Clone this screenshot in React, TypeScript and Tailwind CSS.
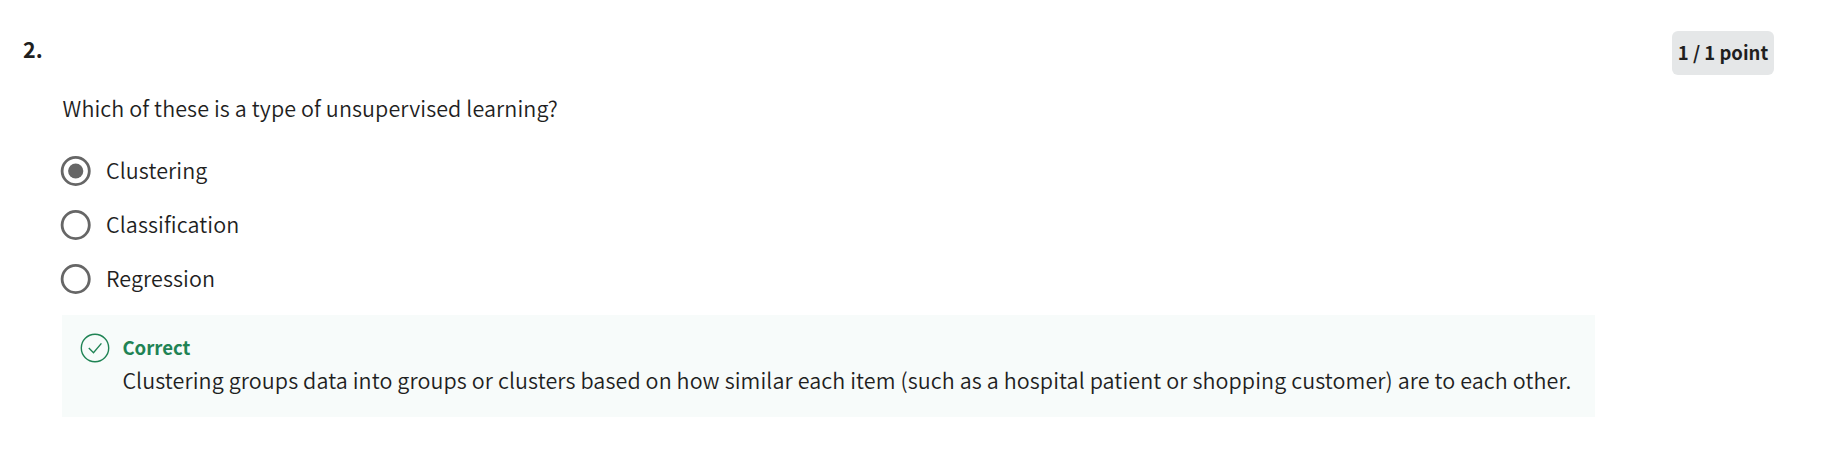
const options = [
  { label: "Clustering", selected: true },
  { label: "Classification", selected: false },
  { label: "Regression", selected: false },
];

function Radio({ selected }: { selected: boolean }) {
  return (
    <svg className="size-[32px] shrink-0" viewBox="0 0 32 32" fill="none">
      <circle cx="15.7" cy="16" r="13.6" stroke="#666" strokeWidth="2.8" />
      {selected && <circle cx="15.7" cy="16" r="7.6" fill="#666" />}
    </svg>
  );
}

export default function App() {
  return (
    <main className="h-[457px] overflow-hidden bg-white font-['Noto_Sans_CJK_SC',sans-serif] text-[21.5px] leading-[30px] font-[350] tracking-[0.096px] text-[#1f1f1f]">
      <header className="flex items-start justify-between pt-[31px] pr-[51px] pl-[23px]">
        <h2 className="pt-[3px] font-bold tracking-normal">2.</h2>
        <div className="flex h-11 w-[102px] items-center justify-center rounded-md bg-[#e5e7e8] pb-[2px] text-[18.5px] font-bold tracking-normal whitespace-nowrap">
          1 / 1 point
        </div>
      </header>
      <section className="pl-[62px]">
        <p className="mt-[18px] pl-[0.6px]">Which of these is a type of unsupervised learning?</p>
        <div className="mt-[21px] -ml-[2px] flex flex-col">
          {options.map((option) => (
            <label key={option.label} className="flex h-[54px] items-center gap-[14px]">
              <Radio selected={option.selected} />
              <span className="pb-[2px]">{option.label}</span>
            </label>
          ))}
        </div>
        <div className="mt-[9px] flex h-[102px] w-[1533px] gap-[12px] bg-[#f7fbfa] pt-[18px] pl-[18px]">
          <svg className="size-[30px] shrink-0" viewBox="0 0 30 30" fill="none" stroke="#1f8354" strokeWidth="1.4">
            <circle cx="15" cy="15" r="13.7" />
            <path d="m8.8 15.1 4.7 4.7 7.9-9.4" />
          </svg>
          <div className="-mt-px pl-[0.4px] whitespace-nowrap">
            <h3 className="text-[18.6px] font-bold tracking-normal text-[#1f8354]">Correct</h3>
            <p className="pt-[3px]">
              Clustering groups data into groups or clusters based on how similar each item (such as a hospital patient or shopping customer) are to each other.
            </p>
          </div>
        </div>
      </section>
    </main>
  );
}
